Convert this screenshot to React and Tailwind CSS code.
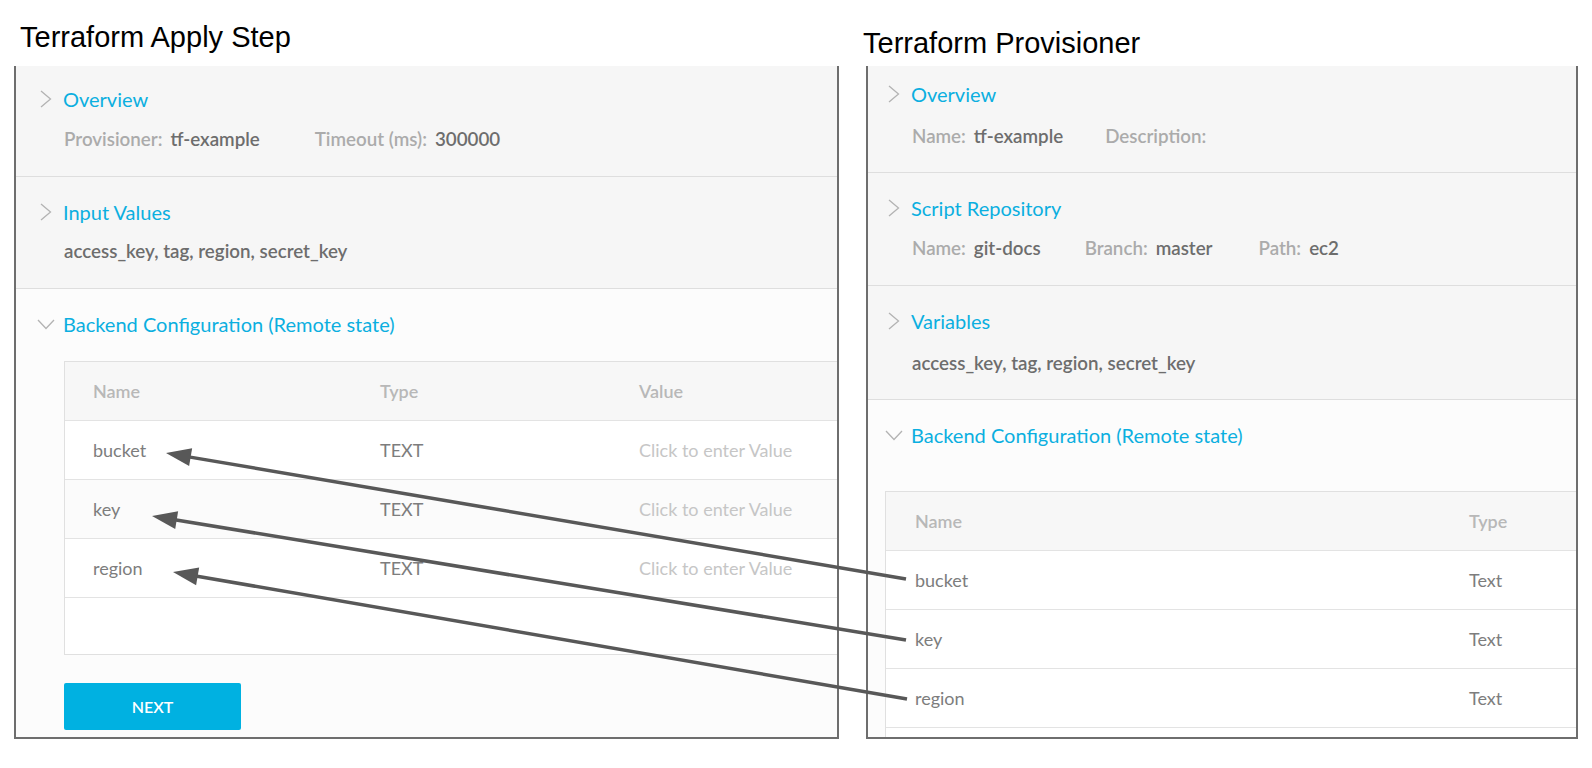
import React from "react";

const ui = { fontFamily: "Lato, 'Open Sans', sans-serif" };
const title = { fontFamily: "'Liberation Sans', Arial, sans-serif" };

function ChevronRight() {
  return (
    <svg width="12" height="18" viewBox="0 0 12 18" className="shrink-0">
      <polyline points="1,1 10.5,9 1,17" fill="none" stroke="#b3b3b3" strokeWidth="1.3" />
    </svg>
  );
}

function ChevronDown() {
  return (
    <svg width="18" height="11" viewBox="0 0 18 11" className="shrink-0">
      <polyline points="1,1 9,9.5 17,1" fill="none" stroke="#b3b3b3" strokeWidth="1.3" />
    </svg>
  );
}

function Header({ label, open, indent }) {
  return (
    <div className={`flex h-6 items-center ${indent}`}>
      {open ? (
        <div className="-ml-[3px] mr-[8px] flex w-[18px] justify-center">
          <ChevronDown />
        </div>
      ) : (
        <div className="mr-[11px] flex w-[12px]">
          <ChevronRight />
        </div>
      )}
      <span className="text-[20px] text-[#0bafe0]">{label}</span>
    </div>
  );
}

function Field({ label, value, className = "" }) {
  return (
    <div className={`flex items-center gap-[8px] ${className}`}>
      <span className="text-[#ababab]">{label}</span>
      <span className="text-[#6d6d6d]">{value}</span>
    </div>
  );
}

// arrow from a right-panel row name back to the left-panel row name
function Arrow({ from, to }) {
  const dx = to[0] - from[0];
  const dy = to[1] - from[1];
  const len = Math.hypot(dx, dy);
  const ux = dx / len;
  const uy = dy / len;
  const L = 25;
  const W = 9;
  const bx = to[0] - ux * L;
  const by = to[1] - uy * L;
  const pts = `${to[0]},${to[1]} ${bx - uy * W},${by + ux * W} ${bx + uy * W},${by - ux * W}`;
  return (
    <g>
      <line x1={from[0]} y1={from[1]} x2={bx + ux * 2} y2={by + uy * 2} stroke="#585858" strokeWidth="3.5" />
      <polygon points={pts} fill="#585858" />
    </g>
  );
}

const applyRows = ["bucket", "key", "region"];

export default function App() {
  return (
    <div className="relative flex h-[768px] w-[1592px] overflow-hidden bg-white" style={ui}>
      {/* Terraform Apply Step */}
      <div className="ml-[14px] w-[825px] shrink-0">
        <div className="h-[66px] pl-[6px] pt-[21px] text-[29px] leading-[33px] text-black" style={title}>
          Terraform Apply Step
        </div>
        <div className="h-[673px] overflow-hidden border-x-2 border-b-2 border-[#6e6e6e]">
          <div className="h-[111px] border-b border-[#dedede] bg-[#f6f6f6] pt-[21px]">
            <Header label="Overview" indent="pl-[24px]" />
            <div className="mt-[16px] flex h-6 items-center pl-[48px] text-[18.75px] font-semibold">
              <Field label="Provisioner:" value="tf-example" />
              <Field label="Timeout (ms):" value="300000" className="ml-[55px]" />
            </div>
          </div>
          <div className="h-[112px] border-b border-[#dedede] bg-[#f6f6f6] pt-[23px]">
            <Header label="Input Values" indent="pl-[24px]" />
            <div className="mt-[15px] flex h-6 items-center pl-[48px] text-[18.75px] font-semibold text-[#6d6d6d]">
              access_key, tag, region, secret_key
            </div>
          </div>
          <div className="h-[448px] bg-[#fcfcfc] pt-[23px]">
            <Header label="Backend Configuration (Remote state)" open indent="pl-[24px]" />
            <div className="ml-[48px] mt-[25px] w-[900px] border border-[#e0e0e0] text-[18px]">
              <div className="flex h-[58px] items-center bg-[#f7f7f7] font-semibold text-[#b8b8b8]">
                <div className="w-[315px] pl-[28px]">Name</div>
                <div className="w-[259px]">Type</div>
                <div className="flex-1">Value</div>
              </div>
              {applyRows.map((r, i) => (
                <div
                  key={r}
                  className={`flex h-[59px] items-center border-t border-[#e3e3e3] ${i === 1 ? "bg-[#fbfbfb]" : "bg-white"}`}
                >
                  <div className="w-[315px] pl-[28px] text-[#7d7d7d]">{r}</div>
                  <div className="w-[259px] text-[#7d7d7d]">TEXT</div>
                  <div className="flex-1 text-[#c6c6c6]">Click to enter Value</div>
                </div>
              ))}
              <div className="h-[57px] border-t border-[#e3e3e3] bg-white" />
            </div>
            <button className="ml-[48px] mt-[28px] flex h-[47px] w-[177px] items-center justify-center rounded-[2px] bg-[#00b1e1] text-[16px] font-semibold text-white">
              NEXT
            </button>
          </div>
        </div>
      </div>

      {/* Terraform Provisioner */}
      <div className="ml-[27px] w-[712px] shrink-0">
        <div className="-ml-[3px] h-[66px] pt-[27px] text-[29px] leading-[33px] text-black" style={title}>
          Terraform Provisioner
        </div>
        <div className="h-[673px] overflow-hidden border-x-2 border-b-2 border-[#6e6e6e]">
          <div className="h-[107px] border-b border-[#dedede] bg-[#f6f6f6] pt-[16px]">
            <Header label="Overview" indent="pl-[20px]" />
            <div className="mt-[18px] flex h-6 items-center pl-[44px] text-[18.75px] font-semibold">
              <Field label="Name:" value="tf-example" />
              <Field label="Description:" value="" className="ml-[42px]" />
            </div>
          </div>
          <div className="h-[113px] border-b border-[#dedede] bg-[#f6f6f6] pt-[23px]">
            <Header label="Script Repository" indent="pl-[20px]" />
            <div className="mt-[16px] flex h-6 items-center pl-[44px] text-[18.75px] font-semibold">
              <Field label="Name:" value="git-docs" />
              <Field label="Branch:" value="master" className="ml-[44px]" />
              <Field label="Path:" value="ec2" className="ml-[46px]" />
            </div>
          </div>
          <div className="h-[114px] border-b border-[#dedede] bg-[#f6f6f6] pt-[23px]">
            <Header label="Variables" indent="pl-[20px]" />
            <div className="mt-[18px] flex h-6 items-center pl-[44px] text-[18.75px] font-semibold text-[#6d6d6d]">
              access_key, tag, region, secret_key
            </div>
          </div>
          <div className="h-[400px] bg-[#fcfcfc] pt-[23px]">
            <Header label="Backend Configuration (Remote state)" open indent="pl-[20px]" />
            <div className="ml-[17px] mt-[44px] w-[820px] border border-[#e0e0e0] text-[18px]">
              <div className="flex h-[58px] items-center bg-[#f7f7f7] font-semibold text-[#b8b8b8]">
                <div className="w-[583px] pl-[29px]">Name</div>
                <div className="flex-1">Type</div>
              </div>
              {applyRows.map((r) => (
                <div key={r} className="flex h-[59px] items-center border-t border-[#e3e3e3] bg-white">
                  <div className="w-[583px] pl-[29px] text-[#7d7d7d]">{r}</div>
                  <div className="flex-1 text-[#7d7d7d]">Text</div>
                </div>
              ))}
              <div className="h-[59px] border-t border-[#e3e3e3] bg-white" />
            </div>
          </div>
        </div>
      </div>

      {/* arrows drawn over both panels */}
      <svg className="pointer-events-none absolute left-0 top-0" width="1592" height="768">
        <Arrow from={[906, 579]} to={[166, 453]} />
        <Arrow from={[906, 640]} to={[152, 516]} />
        <Arrow from={[907, 699]} to={[173, 572]} />
      </svg>
    </div>
  );
}
